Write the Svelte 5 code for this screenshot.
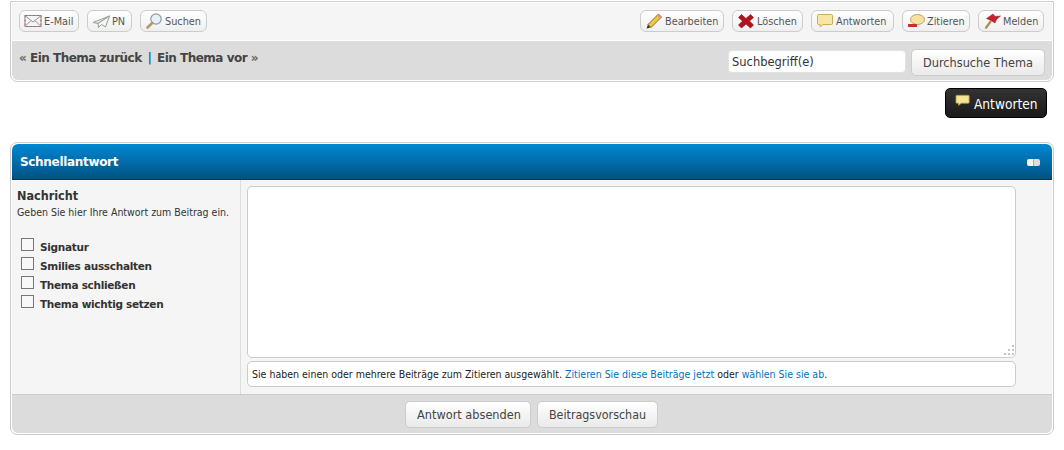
<script>
  const leftActions = [
    { label: 'E-Mail', icon: 'mail', w: 60 },
    { label: 'PN', icon: 'plane', w: 45 },
    { label: 'Suchen', icon: 'search', w: 67 }
  ];
  const rightActions = [
    { label: 'Bearbeiten', icon: 'pencil', w: 84 },
    { label: 'Löschen', icon: 'cross', w: 71 },
    { label: 'Antworten', icon: 'bubble', w: 83 },
    { label: 'Zitieren', icon: 'quote', w: 68 },
    { label: 'Melden', icon: 'flag', w: 66 }
  ];
  const options = ['Signatur', 'Smilies ausschalten', 'Thema schließen', 'Thema wichtig setzen'];
</script>

{#snippet icon(name)}
  <svg class="ico" viewBox="0 0 18 16" width="18" height="16" aria-hidden="true">
    {#if name === 'mail'}
      <rect x="1" y="2.500" width="16" height="11" fill="#f6f5ee" stroke="#7f93b5"/>
      <rect x="1" y="2.500" width="16" height="11" fill="none" stroke="#cf5a5a" stroke-dasharray="2 2"/>
      <path d="M2 3.500l7 5.500 7-5.500M2 12.500l5-5M16 12.500l-5-5" fill="none" stroke="#8796a8"/>
    {:else if name === 'plane'}
      <path d="M1 9.500L17.500 3 6 10.500z" fill="#e9ece6" stroke="#93a094" stroke-linejoin="round"/>
      <path d="M6 10.500L17.500 3 13.500 14 9.500 11.500 6.500 14.500z" fill="#f5f6f2" stroke="#93a094" stroke-linejoin="round"/>
    {:else if name === 'search'}
      <circle cx="11" cy="6" r="5.200" fill="#e6f0f7" stroke="#8a9aa6" stroke-width="1.200"/>
      <path d="M7.200 10L2.500 14.500" stroke="#b69a66" stroke-width="2.600" stroke-linecap="round"/>
    {:else if name === 'pencil'}
      <path d="M3 11.500L13.500 1l3 3L6 14.500z" fill="#f1c644" stroke="#8a6d1e"/>
      <path d="M3 11.500l-1.500 4 4-1z" fill="#3a3226"/>
      <path d="M13.500 1l3 3-1.500 1.500-3-3z" fill="#e48a8a"/>
    {:else if name === 'cross'}
      <path d="M4.500 1.500L9 5.500l4.500-4 3 3L12.500 8l4 4-3 3L9 11l-4.500 4-3-3 4-4-4-3.500z" fill="#b3121c" stroke="#7d0c12" stroke-width=".6"/>
    {:else if name === 'bubble'}
      <path d="M2.500 1.500h13a1 1 0 0 1 1 1v8a1 1 0 0 1-1 1H7l-3 2.500v-2.500H2.500a1 1 0 0 1-1-1v-8a1 1 0 0 1 1-1z" fill="#f8e7a2" stroke="#c9ad5c"/>
    {:else if name === 'quote'}
      <ellipse cx="10.500" cy="6.500" rx="7" ry="5" fill="#f5e2a0" stroke="#b9a368"/>
      <rect x="1" y="11" width="9" height="3" rx=".5" fill="#cf2a2c"/>
    {:else if name === 'flag'}
      <path d="M2.500 15.500L8 8" stroke="#b08a5c" stroke-width="2.200"/>
      <path d="M3.500 5.500L10 1l2 2.500 5.500-.5-4 3.500L12 10 8 7.500z" fill="#c8202c" stroke="#8f161e" stroke-width=".5"/>
    {/if}
  </svg>
{/snippet}

<div class="page">
  <section class="panel top">
    <div class="toolbar">
      <div class="group">
        {#each leftActions as a}
          <button class="pill" style="width:{a.w}px">{@render icon(a.icon)}<span>{a.label}</span></button>
        {/each}
      </div>
      <div class="group">
        {#each rightActions as a}
          <button class="pill" style="width:{a.w}px">{@render icon(a.icon)}<span>{a.label}</span></button>
        {/each}
      </div>
    </div>
    <div class="navrow">
      <div class="threadnav"><span class="q">«</span> Ein Thema zurück <span class="sep">|</span> Ein Thema vor <span class="q">»</span></div>
      <div class="searchbox">
        <input class="term" value="Suchbegriff(e)" />
        <button class="btn search-btn">Durchsuche Thema</button>
      </div>
    </div>
  </section>

  <div class="replyrow">
    <button class="darkbtn">
      <svg viewBox="0 0 18 16" width="16" height="14" aria-hidden="true"><path d="M2 1.500h13a1 1 0 0 1 1 1v7a1 1 0 0 1-1 1H7l-3 2.500v-2.500H2a1 1 0 0 1-1-1v-7a1 1 0 0 1 1-1z" fill="#f7e596" stroke="#b5963e"/></svg>
      <span>Antworten</span>
    </button>
  </div>

  <section class="panel quick">
    <header class="head">
      <strong>Schnellantwort</strong>
      <span class="collapse"></span>
    </header>
    <div class="body">
      <aside class="side">
        <div class="msgtitle">Nachricht</div>
        <div class="msghint">Geben Sie hier Ihre Antwort zum Beitrag ein.</div>
        <ul class="opts">
          {#each options as o}
            <li><span class="check"></span><b>{o}</b></li>
          {/each}
        </ul>
      </aside>
      <div class="main">
        <div class="textarea">
          <svg class="grip" viewBox="0 0 12 12" width="12" height="12" aria-hidden="true">
            <g fill="#c4c4c4">
              <rect x="9" y="0" width="2" height="2"/><rect x="5" y="4" width="2" height="2"/><rect x="9" y="4" width="2" height="2"/>
              <rect x="1" y="8" width="2" height="2"/><rect x="5" y="8" width="2" height="2"/><rect x="9" y="8" width="2" height="2"/>
            </g>
          </svg>
        </div>
        <div class="note">Sie haben einen oder mehrere Beiträge zum Zitieren ausgewählt. <a href="#z">Zitieren Sie diese Beiträge jetzt</a> oder <a href="#w">wählen Sie sie ab</a>.</div>
      </div>
    </div>
    <footer class="foot">
      <button class="btn send">Antwort absenden</button>
      <button class="btn preview">Beitragsvorschau</button>
    </footer>
  </section>
</div>

<style>
  :global(body) {
    margin: 0;
    background: #fff;
    color: #333;
    font-family: "DejaVu Sans Condensed", "DejaVu Sans", sans-serif;
    font-size: 11px;
  }
  .page { width: 1044px; margin-left: 10px; height: 450px; overflow: hidden; padding-top: 1px; box-sizing: border-box; }
  .panel {
    box-sizing: border-box;
    border: 1px solid #ccc;
    padding: 1px;
    background: #fff;
    border-radius: 0 0 7px 7px;
  }
  .top { height: 81px; display: flex; flex-direction: column; }
  .toolbar {
    height: 37px;
    background: #f5f5f5;
    display: flex;
    justify-content: space-between;
    padding: 7px 8px 0 7px;
    box-sizing: border-box;
  }
  .group { display: flex; gap: 8px; }
  .pill {
    box-sizing: border-box;
    height: 22px;
    padding: 0 0 0 4px;
    display: flex;
    align-items: center;
    gap: 2px;
    border: 1px solid #ccc;
    border-radius: 6px;
    background: linear-gradient(#fff, #efefef);
    color: #555;
    font: 10.800px "DejaVu Sans Condensed", "DejaVu Sans", sans-serif;
    white-space: nowrap;
  }
  .ico { flex: none; }
  .navrow {
    flex: 1;
    margin-top: 1px;
    background: #dcdcdc;
    border-radius: 0 0 6px 6px;
    display: flex;
    justify-content: space-between;
    padding: 7px 7px 0 7px;
    box-sizing: border-box;
    border-top: 1px solid #ddd;
  }
  .threadnav { font: bold 12px "DejaVu Sans", sans-serif; color: #444; padding-top: 2px; letter-spacing: -.5px; }
  .q { color: #666; }
  .sep { color: #0072bc; font-weight: bold; margin: 0 2px; }
  .searchbox { display: flex; gap: 5px; align-items: flex-start; }
  .term {
    box-sizing: border-box;
    width: 178px;
    height: 23px;
    margin-top: 1px;
    border: 1px solid #e2e2e2;
    border-radius: 4px;
    background: #fff;
    padding: 0 3px;
    font: 11.500px "DejaVu Sans", sans-serif;
    color: #333;
    outline: none;
  }
  .btn {
    box-sizing: border-box;
    height: 27px;
    border: 1px solid #ccc;
    border-radius: 5px;
    background: linear-gradient(#fff, #eaeaea);
    color: #444;
    font: 12.600px "DejaVu Sans Condensed", "DejaVu Sans", sans-serif;
    padding: 0;
  }
  .search-btn { width: 134px; }
  .replyrow { display: flex; justify-content: flex-end; padding: 6px 7px 0 0; height: 60px; box-sizing: border-box; }
  .darkbtn {
    box-sizing: border-box;
    width: 102px;
    height: 30px;
    border: 1px solid #000;
    border-radius: 5px;
    background: linear-gradient(#333, #1a1a1a);
    color: #fff;
    font: 13.600px "DejaVu Sans Condensed", "DejaVu Sans", sans-serif;
    display: flex;
    align-items: center;
    gap: 3px;
    padding: 0 0 0 9px;
  }
  .darkbtn svg { margin-top: -4px; }
  .darkbtn span { margin-top: 1px; }
  .quick { height: 293px; border-radius: 7px; display: flex; flex-direction: column; }
  .head {
    height: 36px;
    flex: none;
    box-sizing: border-box;
    background: linear-gradient(#0088d2, #005282);
    border-bottom: 1px solid #263238;
    border-radius: 6px 6px 0 0;
    color: #fff;
    display: flex;
    align-items: center;
    justify-content: space-between;
    padding: 0 12px 0 8px;
    font: bold 12px "DejaVu Sans", sans-serif;
  }
  .head strong { letter-spacing: -.32px; }
  .collapse {
    width: 13px;
    height: 7px;
    border-radius: 2px;
    background: linear-gradient(90deg, #f4f4f4 0 46%, #aaa 46% 54%, #ddd 54%);
    margin-top: 1px;
  }
  .body { flex: 1; display: flex; background: #f5f5f5; }
  .side { box-sizing: border-box; width: 229px; border-right: 1px solid #ddd; padding: 8px 0 0 5px; flex: none; }
  .msgtitle { font: bold 12.500px "DejaVu Sans Condensed", "DejaVu Sans", sans-serif; color: #333; line-height: 16px; }
  .msghint { font: 10.500px "DejaVu Sans Condensed", "DejaVu Sans", sans-serif; color: #333; line-height: 16px; }
  .opts { list-style: none; margin: 18px 0 0 4px; padding: 0; }
  .opts li { height: 19px; display: flex; align-items: flex-start; gap: 6px; }
  .check { box-sizing: border-box; width: 13px; height: 13px; border: 1px solid #777; background: #f8f8f8; flex: none; }
  .opts b { font: bold 10.500px "DejaVu Sans", sans-serif; color: #333; letter-spacing: -.3px; margin-top: 3px; }
  .main { flex: 1; padding: 6px 0 0 6px; }
  .textarea {
    box-sizing: border-box;
    width: 769px;
    height: 172px;
    background: #fff;
    border: 1px solid #ccc;
    border-radius: 5px;
    position: relative;
  }
  .grip { position: absolute; right: 0; bottom: 0; }
  .note {
    box-sizing: border-box;
    width: 769px;
    height: 26px;
    margin-top: 3px;
    background: #fff;
    border: 1px solid #ccc;
    border-radius: 5px;
    padding: 0 4px;
    font: 10.500px/25px "DejaVu Sans Condensed", "DejaVu Sans", sans-serif;
    color: #222;
  }
  .note a { color: #0072bc; text-decoration: none; }
  .foot {
    height: 39px;
    flex: none;
    background: #dcdcdc;
    border-top: 1px solid #ccc;
    box-sizing: border-box;
    border-radius: 0 0 6px 6px;
    display: flex;
    justify-content: center;
    gap: 6px;
    padding: 6px 2px 0 0;
  }
  .send { width: 126px; padding-left: 3px; }
  .preview { width: 121px; font-size: 12.400px; padding-left: 1px; }
</style>
